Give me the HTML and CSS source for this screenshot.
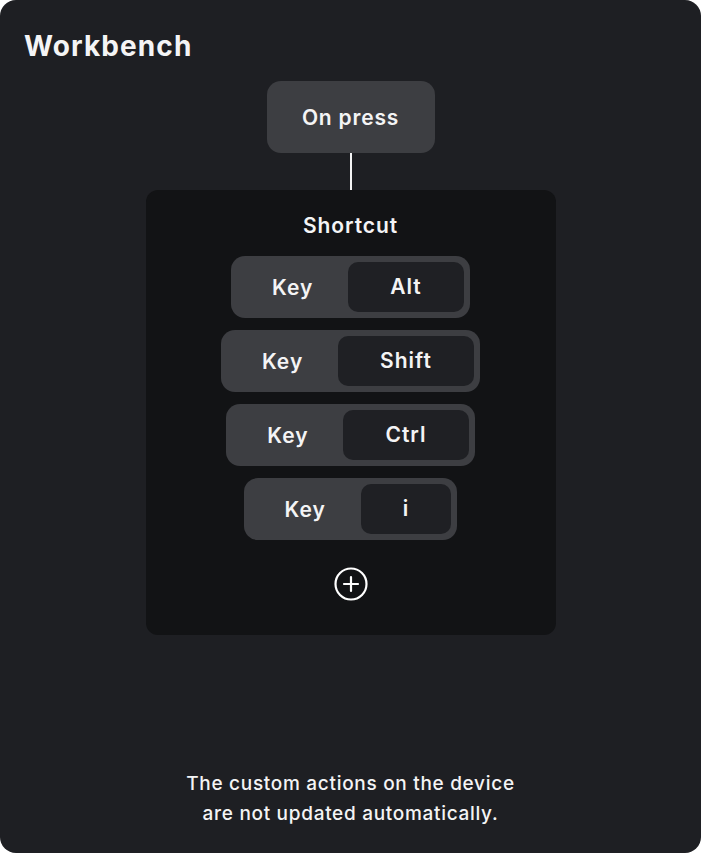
FILE: index.html
```html
<!DOCTYPE html>
<html lang="en">
<head>
    <meta charset="UTF-8">
    <title>Workbench</title>
    <link rel="stylesheet" href="styles.css">
</head>
<body>
<div class="card">
    <h1 class="title">Workbench</h1>
    <div class="flow">
        <div class="trigger">On press</div>
        <div class="link"></div>
        <div class="shortcut">
            <div class="shortcut-name">Shortcut</div>
            <ul class="keys">
                <li class="key"><span class="key-label">Key</span><span class="key-value">Alt</span></li>
                <li class="key"><span class="key-label">Key</span><span class="key-value">Shift</span></li>
                <li class="key"><span class="key-label">Key</span><span class="key-value">Ctrl</span></li>
                <li class="key"><span class="key-label">Key</span><span class="key-value">i</span></li>
            </ul>
            <button class="add" type="button">
                <svg width="36" height="36" viewBox="0 0 36 36" fill="none" stroke="#fff" stroke-width="2.2" stroke-linecap="round">
                    <circle cx="18" cy="18" r="15.5"/>
                    <path d="M18 11v14M11 18h14"/>
                </svg>
            </button>
        </div>
    </div>
    <p class="note">The custom actions on the device<br>are not updated automatically.</p>
</div>
</body>
</html>
```

FILE: styles.css
```css
*{
    margin:0;
    padding:0;
    box-sizing: border-box;
    list-style: none;
}
body{
    background: #fff;
    font-family: Inter, "Noto Sans", sans-serif;
    color: #f4f4f5;
}
.card{
    width: 701px;
    height: 853px;
    background: #1e1f23;
    border-radius: 16px;
    display: flex;
    flex-direction: column;
    padding: 28px 0 24px;
}
.title{
    font-size: 28px;
    font-weight: 700;
    letter-spacing: 1.1px;
    line-height: 36px;
    padding-left: 24px;
}
.flow{
    display: flex;
    flex-direction: column;
    align-items: center;
    margin-top: 17px;
}
.trigger{
    width: 168px;
    height: 72px;
    border-radius: 14px;
    background: #3d3e42;
    display: flex;
    align-items: center;
    justify-content: center;
    font-size: 21px;
    font-weight: 600;
    letter-spacing: 0.8px;
}
.link{
    width: 2px;
    height: 37px;
    background: #f4f4f5;
}
.shortcut{
    width: 410px;
    height: 445px;
    border-radius: 12px;
    background: #121315;
    display: flex;
    flex-direction: column;
    align-items: center;
    padding-top: 22px;
}
.shortcut-name{
    font-size: 21px;
    font-weight: 600;
    letter-spacing: 0.9px;
    line-height: 28px;
}
.keys{
    display: flex;
    flex-direction: column;
    align-items: center;
    gap: 12px;
    margin-top: 16px;
}
.key{
    display: flex;
    align-items: center;
    height: 62px;
    padding: 6px;
    border-radius: 14px;
    background: #3d3e42;
    font-size: 21px;
    font-weight: 600;
    letter-spacing: 1px;
}
.key-label{
    width: 111px;
    text-align: center;
}
.key-value{
    height: 50px;
    line-height: 50px;
    padding: 0 42px;
    border-radius: 10px;
    background: #1f2024;
}
.add{
    margin-top: 26px;
    background: none;
    border: 0;
    width: 36px;
    height: 36px;
    cursor: pointer;
}
.add svg{
    display: block;
}
.note{
    margin-top: auto;
    text-align: center;
    font-size: 19px;
    font-weight: 500;
    letter-spacing: 0.7px;
    line-height: 30px;
}
```
